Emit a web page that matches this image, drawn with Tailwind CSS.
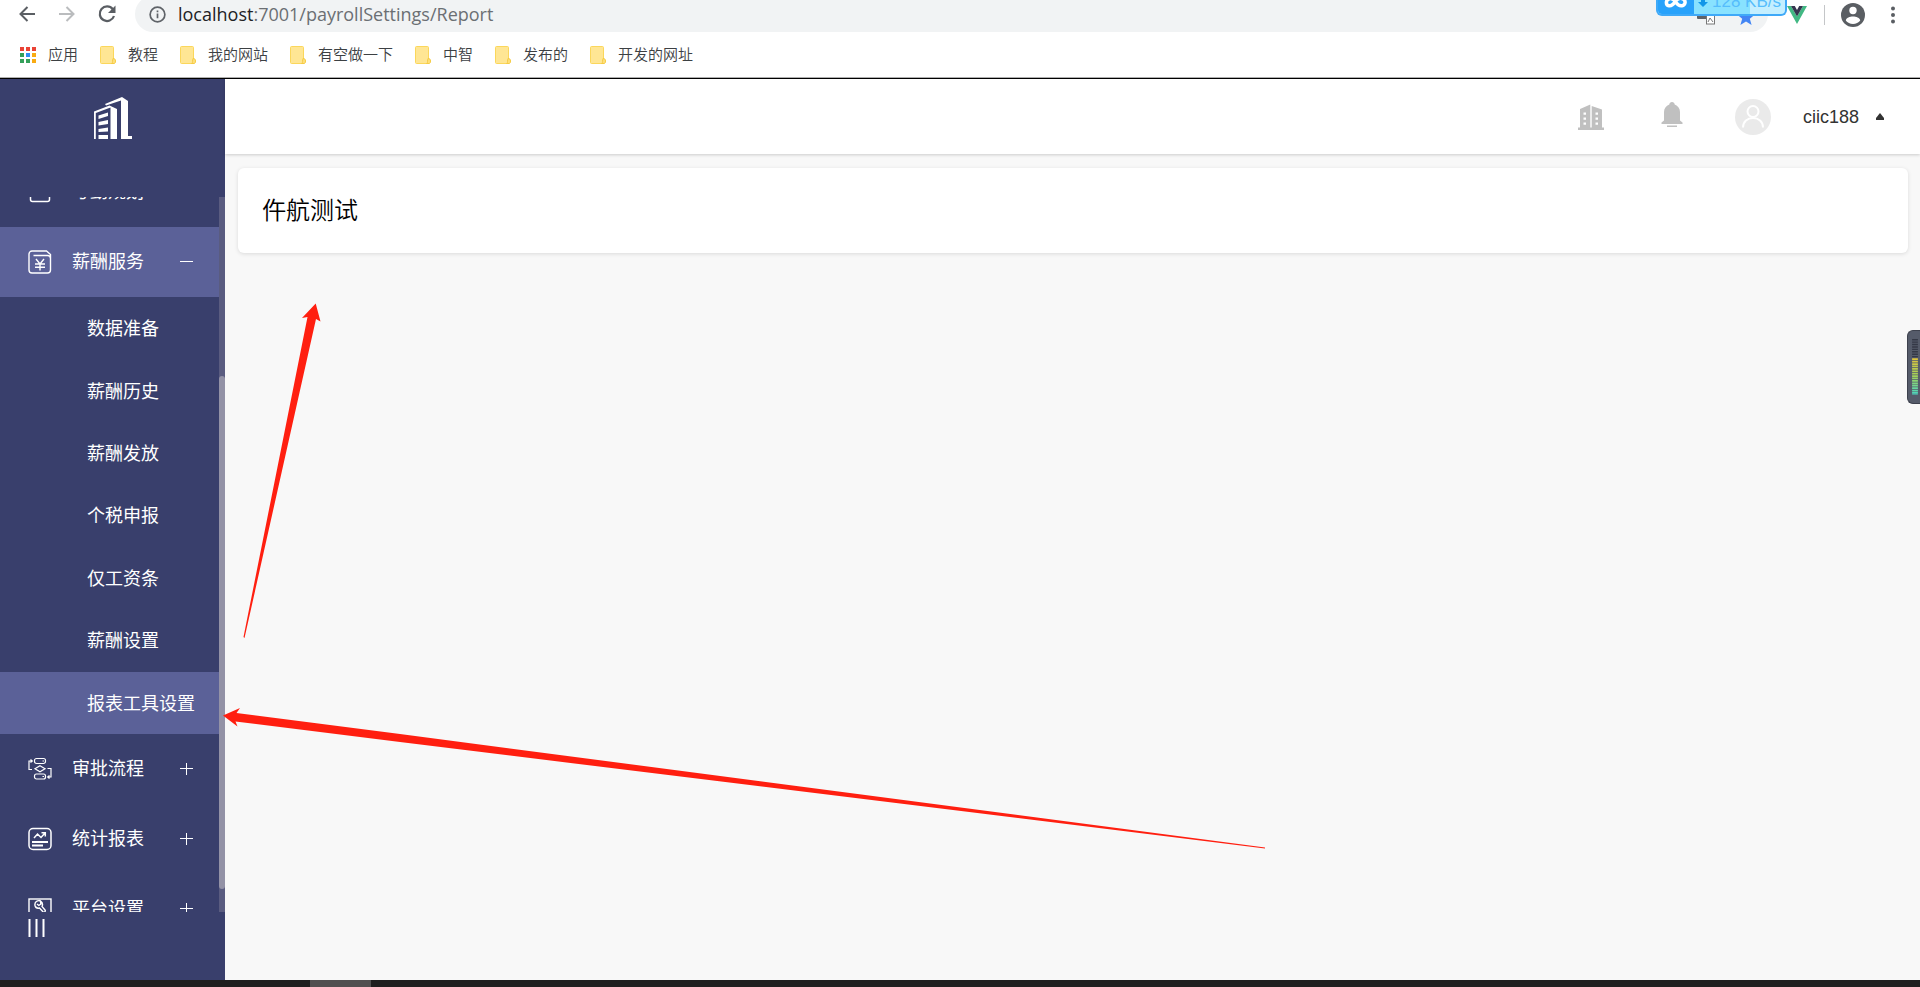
<!DOCTYPE html>
<html lang="zh-CN">
<head>
<meta charset="utf-8">
<title>仵航测试</title>
<script src="https://cdn.jsdelivr.net/npm/@tailwindcss/browser@4"></script>
</head>
<body class="relative flex h-screen flex-col overflow-hidden bg-white font-['Liberation_Sans','Noto_Sans_CJK_SC',sans-serif] font-[350] text-black">

<svg class="hidden">
  <symbol id="folder" viewBox="0 0 16 18">
    <path d="M1.500 .5h11a1 1 0 0 1 1 1v15a1 1 0 0 1-1 1h-11a1 1 0 0 1-1-1v-15a1 1 0 0 1 1-1z" fill="#ffe694" stroke="#fbd75b"/>
    <path d="M13 12.500c1.800 0 2.500.8 2.500 2.500s-.5 2.500-1.500 2.500h-2.500c1.200-.6 1-1.500 1-2.500z" fill="#ffe07a" stroke="#f5cb45"/>
  </symbol>
  <symbol id="plus" viewBox="0 0 13 13"><path d="M0 5.500h13M6.500 -1v13" stroke="#fff" stroke-width="1"/></symbol>
</svg>

<!-- Browser chrome -->
<header class="shrink-0 border-b border-black bg-white">
  <div class="flex h-8 items-start">
    <div class="flex h-7 w-[135px] shrink-0 items-center gap-6 pl-[19px]">
      <button aria-label="后退" class="size-4"><svg viewBox="0 0 16 16" class="size-4" fill="none" stroke="#5a5e63" stroke-width="2"><path d="M16 8H1.500M8.500 1 1.500 8l7 7"/></svg></button>
      <button aria-label="前进" class="size-4"><svg viewBox="0 0 16 16" class="size-4" fill="none" stroke="#babcbe" stroke-width="2"><path d="M0 8h14.500M7.500 1l7 7-7 7"/></svg></button>
      <button aria-label="刷新" class="-ml-0.5 size-5"><svg viewBox="0 0 20 20" class="size-5"><path d="M15.800 5.200A7.300 7.300 0 1 0 17 12" fill="none" stroke="#5a5e63" stroke-width="2.200"/><path d="M18.500 1.500v7.500H11z" fill="#5a5e63"/></svg></button>
    </div>
    <div class="-mt-1 flex h-9 min-w-0 flex-1 items-center gap-3 rounded-full bg-[#f1f3f4] pl-3.5">
      <svg viewBox="0 0 18 18" class="size-[17px] shrink-0" fill="none" stroke="#5f6368" stroke-width="1.800"><circle cx="9" cy="9" r="7.800"/><path d="M9 8v5M9 4.800v1.900"/></svg>
      <div class="min-w-0 flex-1 font-['Open_Sans','Noto_Sans',sans-serif] text-[18px] leading-6 font-normal text-[#6b6f73]"><span class="text-[#202124]">localhost</span>:7001/payrollSettings/Report</div>
      <svg viewBox="0 0 18 18" class="mt-1 size-[18px] shrink-0"><rect y="2" width="11" height="10" rx="1" fill="#5f6368"/><rect x="9.500" y="8" width="8" height="9" fill="#fff" stroke="#777"/><path d="m11 15 2-4 3 4" fill="none" stroke="#777"/></svg>
      <svg viewBox="0 0 18 18" class="mt-1.5 mr-[13px] ml-2.5 size-[18px] shrink-0"><path d="m9 0 2.300 6.200 6.700.3-5.200 4.200L14.600 17 9 13.500 3.400 17l1.800-6.300L0 6.500l6.700-.3z" fill="#4285f4"/></svg>
    </div>
    <div class="flex h-[30px] w-[152px] shrink-0 items-center pl-[19px]">
      <svg viewBox="0 0 20 18" class="h-[18px] w-5"><path d="M0 0h4l6 10.500L16 0h4L10 18z" fill="#41b883"/><path d="M4 0h3.800L10 4l2.200-4H16l-6 10.500z" fill="#35354f"/></svg>
      <span class="ml-[17px] h-5 w-px bg-[#c4c6c8]"></span>
      <button aria-label="个人资料" class="ml-4 size-6"><svg viewBox="0 0 24 24" class="size-6"><circle cx="12" cy="12" r="12" fill="#5a5e63"/><circle cx="12" cy="7.500" r="3.700" fill="#fff"/><path d="M4.800 17.500C5 14.700 9 13.400 12 13.400s7 1.300 7.200 4.100C17.500 19.800 15 21 12 21s-5.500-1.200-7.200-3.500z" fill="#fff"/></svg></button>
      <button aria-label="更多" class="ml-5 h-5 w-4"><svg viewBox="0 0 16 20" class="h-5 w-4" fill="#5a5e63"><circle cx="8" cy="3.500" r="2"/><circle cx="8" cy="10" r="2"/><circle cx="8" cy="16.500" r="2"/></svg></button>
    </div>
  </div>
  <nav aria-label="书签" class="flex h-[46px] items-center gap-[22px] border-b border-[#b0b0b0] pl-5 text-[15px] leading-5 text-[#3c4043]">
    <a href="#" class="flex items-center gap-3"><svg viewBox="0 0 16 16" class="size-4"><g fill="#ea4335"><path d="M0 0h4v4H0zM6 0h4v4H6zM12 0h4v4h-4z"/></g><path d="M0 6h4v4H0zM0 12h4v4H0zM6 12h4v4H6z" fill="#34a05a"/><path d="M6 6h4v4H6z" fill="#2f8df5"/><path d="M12 6h4v4h-4zM12 12h4v4h-4z" fill="#f9ab12"/></svg>应用</a>
    <a href="#" class="flex items-center gap-3"><svg class="h-[18px] w-4"><use href="#folder"/></svg>教程</a>
    <a href="#" class="flex items-center gap-3"><svg class="h-[18px] w-4"><use href="#folder"/></svg>我的网站</a>
    <a href="#" class="flex items-center gap-3"><svg class="h-[18px] w-4"><use href="#folder"/></svg>有空做一下</a>
    <a href="#" class="flex items-center gap-3"><svg class="h-[18px] w-4"><use href="#folder"/></svg>中智</a>
    <a href="#" class="flex items-center gap-3"><svg class="h-[18px] w-4"><use href="#folder"/></svg>发布的</a>
    <a href="#" class="flex items-center gap-3"><svg class="h-[18px] w-4"><use href="#folder"/></svg>开发的网址</a>
  </nav>
</header>

<!-- Application -->
<div class="flex min-h-0 flex-1 bg-[#f8f8f8]">
  <aside class="flex w-[225px] shrink-0 flex-col bg-[#393f6c] text-[18px] leading-6 font-normal text-white">
    <div class="flex h-[118px] shrink-0 justify-center pt-[18px]">
      <svg viewBox="0 0 38 42" class="h-[42px] w-[38px]" fill="#fff">
        <path d="M0 14.500 15.500 8.500 23 12v30h-6.500V10.500L1.800 16v26H0z"/>
        <path d="M11 7 28 0l6 4v35h4v3H27V3.500L12 8.500z"/>
        <path d="m4.500 18.500 9.500-3V19l-9.500 3zM4.500 25l9.500-2v4l-9.500 1.500zM4.500 32l9.500-1.500v4L4.500 35zM4.500 38H14v4H4.500z"/>
      </svg>
    </div>
    <div class="flex min-h-0 flex-1 overflow-hidden">
      <nav aria-label="主菜单" class="-mt-10 min-w-0 flex-1">
        <a href="#" class="flex h-[70px] items-center pl-7">
          <svg viewBox="0 0 24 24" class="mr-5 size-6" fill="none" stroke="#fff" stroke-width="1.500"><rect x="2.500" y="2.500" width="19" height="19" rx="2"/></svg>考勤规划
        </a>
        <a href="#" class="flex h-[70px] items-center bg-[#5b6198] pl-7">
          <svg viewBox="0 0 24 24" class="mr-5 size-6" fill="none" stroke="#fff" stroke-width="1.400"><path d="M4 1h14.500l4 3.500V20a3 3 0 0 1-3 3H4a3 3 0 0 1-3-3V4a3 3 0 0 1 3-3zM5.500 5.500h14a3 3 0 0 1 3 3"/><path d="m8 9 4 5 4-5M7 14h10M7 17.200h10M12 14v6.500"/></svg>薪酬服务
          <svg viewBox="0 0 13 13" class="ml-9 size-[13px]"><path d="M0 5.500h13" stroke="#fff"/></svg>
        </a>
        <div class="grid h-[437px] auto-rows-fr">
          <a href="#" class="flex items-center pt-0.5 pl-[87px]">数据准备</a>
          <a href="#" class="flex items-center pt-0.5 pl-[87px]">薪酬历史</a>
          <a href="#" class="flex items-center pt-0.5 pl-[87px]">薪酬发放</a>
          <a href="#" class="flex items-center pt-0.5 pl-[87px]">个税申报</a>
          <a href="#" class="flex items-center pt-0.5 pl-[87px]">仅工资条</a>
          <a href="#" class="flex items-center pt-0.5 pl-[87px]">薪酬设置</a>
          <a href="#" class="flex items-center bg-[#5b6198] pt-0.5 pl-[87px]">报表工具设置</a>
        </div>
        <a href="#" class="flex h-[70px] items-center pl-7">
          <svg viewBox="0 0 24 24" class="mr-5 size-6" fill="none" stroke="#fff" stroke-width="1.200"><rect x="6.500" y="1.500" width="11" height="5" rx="2"/><rect x="6.500" y="17" width="11" height="5" rx="2"/><path d="m12 8.800 5 3-5 3-5-3zM4 12.500H1V4h3M2.500 2.500 4.300 4 2.500 5.500M19.500 11.500H23V20h-3M21.500 18.500 19.700 20l1.800 1.500M14.500 4H16M14.500 19.500H16"/></svg>审批流程
          <svg class="ml-9 size-[13px] overflow-visible"><use href="#plus"/></svg>
        </a>
        <a href="#" class="flex h-[70px] items-center pl-7">
          <svg viewBox="0 0 24 24" class="mr-5 size-6" fill="none" stroke="#fff" stroke-width="1.500"><rect x="1" y="1.500" width="22" height="21" rx="4"/><path d="m6 11 3.500-4 3.500 3.500L17 6M13.500 5.700h3.800V9.500"/><path d="M4 15h16M4 18.500h11" stroke-width="2"/></svg>统计报表
          <svg class="ml-9 size-[13px]"><use href="#plus"/></svg>
        </a>
        <a href="#" class="flex h-[70px] items-center pl-7">
          <svg viewBox="0 0 24 24" class="mr-5 size-6" fill="none" stroke="#fff" stroke-width="1.400"><rect x="1" y="2" width="22" height="22"/><path d="M12.500 4a4 4 0 0 0-5.500 4.500c.5 2 2.500 3 4.500 2.500l3.500 3.800c1.300 1 3-.5 2-1.800L14 9.500c1-2 .5-4-1.500-5.500l.3 3.200-2 1.300L9 7"/></svg>平台设置
          <svg class="ml-9 size-[13px]"><use href="#plus"/></svg>
        </a>
      </nav>
      <div class="flex w-1.5 flex-col bg-[#5a5c80] pt-[179px]"><div class="h-[513px] rounded-full bg-[#9392a6]"></div></div>
    </div>
    <div class="h-[68px] shrink-0 pt-[7px] pl-7">
      <button aria-label="收起菜单" class="block"><svg viewBox="0 0 18 18" class="size-[18px]" stroke="#fff" stroke-width="2"><path d="M1.500 0v18M8.500 0v18M15.500 0v18"/></svg></button>
    </div>
  </aside>

  <div class="flex min-w-0 flex-1 flex-col">
    <div class="flex h-[75px] shrink-0 items-center justify-end bg-white pr-9 shadow-[0_1px_3px_rgba(0,0,0,0.18)]">
      <button aria-label="公司" class="mr-[57px]"><svg viewBox="0 0 26 26" class="size-[26px]" fill="#c0c0c0"><path fill-rule="evenodd" d="M0 23.500h2V5L12.300.5v23h1.400V2L24 5.500v18h2V26H0zM5.500 8.500v2.300H8V8.500zm0 5v2.300H8v-2.300zm0 5v2.300H8v-2.300zM17.500 8.500v2.300H20V8.500zm0 5v2.300H20v-2.300zm0 5v2.300H20v-2.300z"/></svg></button>
      <button aria-label="通知" class="mr-[52px] mb-1"><svg viewBox="0 0 22 26" class="h-[26px] w-[22px]" fill="#c0c0c0"><path d="M11 0c1.500 0 2.600 1 2.700 2.400C17 3.500 19 6.500 19 10v8.500l2.500 2V22H.5v-1.500l2.500-2V10c0-3.500 2-6.500 5.300-7.600C8.400 1 9.500 0 11 0zM6 23.500h10V25H6z"/></svg></button>
      <button class="flex items-center text-[18px] leading-6 text-[#333]">
        <svg viewBox="0 0 36 36" class="mr-8 size-9"><circle cx="18" cy="18" r="18" fill="#eaeaea"/><g fill="none" stroke="#fff" stroke-width="2"><circle cx="18" cy="12.500" r="5.500"/><path d="M8 28.500c0-6 4.500-9.500 10-9.500s10 3.500 10 9.500"/></g></svg>
        ciic188
        <svg viewBox="0 0 8 8" class="ml-[17px] size-2" fill="#333"><path d="M4 0 8 5v2H0V5z"/></svg>
      </button>
    </div>
    <main class="p-3.5 pr-3 pl-[13px]">
      <section class="flex h-[85px] items-center rounded-md bg-white px-6 shadow-[0_1px_4px_rgba(0,0,0,0.12)]">
        <h1 class="text-[24px] leading-8 font-[350]">仵航测试</h1>
      </section>
    </main>
  </div>
</div>

<!-- Taskbar edge -->
<footer class="flex h-[7px] shrink-0 bg-[#1f1f1f] pl-[310px]"><div class="w-[61px] bg-[#505050]"></div></footer>

<!-- Network speed widget floating over the browser -->
<div class="absolute top-0 right-[133px] flex h-4 w-[131px] overflow-hidden rounded-b-md border-2 border-t-0 border-[#3fa9f8] bg-[#c4efff]">
  <div class="flex w-9 justify-center bg-[#28a2fb]"><svg viewBox="0 0 24 12" class="h-3 w-6 overflow-visible" fill="none" stroke="#fff" stroke-width="3.500"><path d="M12 2.500c-2.500-3.500-5-4.500-7-3.500C1.500.5 1.500 5 5 5.700c3.500.7 5.500-3 7-5 2-2.500 5-3 7.500-1.500 2.500 2 2 6-1.500 6.500-2.500.5-4.500-1.200-6-3.200"/></svg></div>
  <div class="flex w-14 items-start bg-[#88e2ff] pl-1"><svg viewBox="0 0 10 7" class="h-[7px] w-2.5" fill="#1296e8"><path d="M3 0h4v2h3L5 7 0 2h3z"/></svg></div>
  <span class="absolute -top-2 left-[54px] text-[17px] leading-5 font-normal whitespace-nowrap text-[#55bdfc]">128 KB/s</span>
</div>

<!-- Level meter docked at the right edge -->
<div class="absolute top-[330px] right-0 flex h-[74px] w-[13px] flex-col gap-0.5 rounded-l-md border border-r-0 border-[#3d414d] bg-[#555b6a] py-2 pl-1">
  <svg viewBox="0 0 6 58" class="h-[58px] w-1.5"><defs><linearGradient id="level" gradientUnits="userSpaceOnUse" x1="0" y1="20" x2="0" y2="58"><stop stop-color="#e0c43c"/><stop offset=".5" stop-color="#9fd35c"/><stop offset="1" stop-color="#48d8c4"/></linearGradient></defs><path d="M3 0v20" stroke="#343846" stroke-width="6" stroke-dasharray="1.500 1"/><path d="M3 20v38" stroke="url(#level)" stroke-width="6" stroke-dasharray="1.800 .7"/></svg>
</div>

<!-- Annotation arrows -->
<svg class="pointer-events-none absolute top-0 left-0 h-[987px] w-[1920px]" viewBox="0 0 1920 987" fill="#ff1f10">
  <path d="M315.700 303.500 302 318l5.500-1L243.500 637l1 1L316 319l4.500 2.500z"/>
  <path d="M223 715.500 240 708l-3.500 5L400 734l865 113.500v1L400 742 235.500 721.500l2 5z"/>
</svg>
</body>
</html>
